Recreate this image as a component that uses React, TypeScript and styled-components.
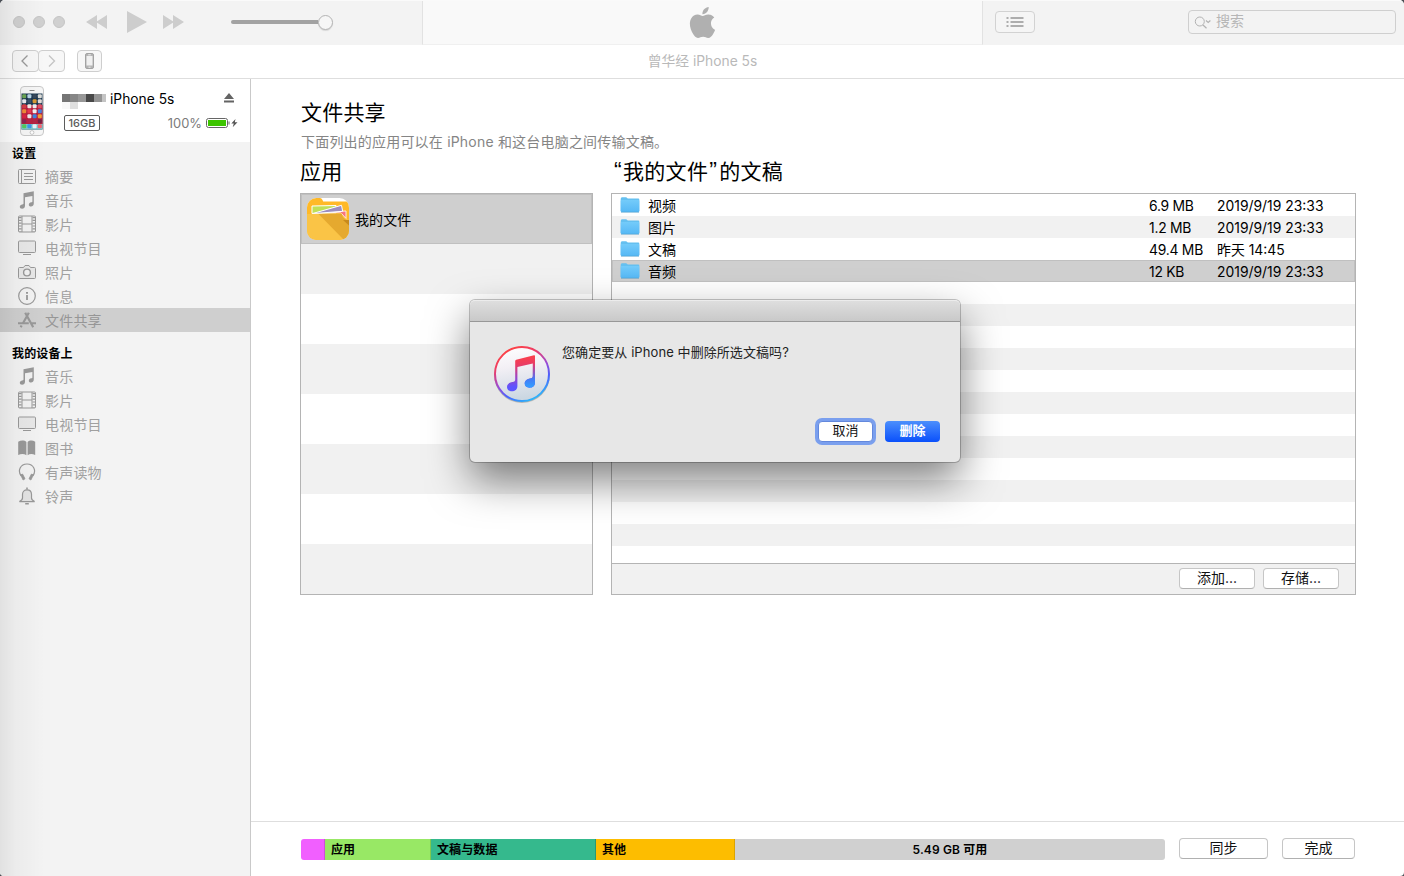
import React from "react";
import styled, { createGlobalStyle, css } from "styled-components";

const GlobalStyle = createGlobalStyle`
  * { box-sizing: border-box; }
  html, body { margin: 0; padding: 0; background: #4a4e55; }
  body { font-family: Inter, "Noto Sans CJK SC", sans-serif; font-size: 14px; color: #000; overflow: hidden; }
  svg { display: block; flex: none; }
`;

const Window = styled.div`
  position: relative;
  display: flex;
  flex-direction: column;
  width: 1404px;
  height: 876px;
  background: #fff;
  border-radius: 5px 5px 4px 4px;
  overflow: hidden;
`;

const EdgeShade = styled.div`
  position: absolute;
  left: 0;
  top: 0;
  bottom: 0;
  width: 45px;
  pointer-events: none;
  background: linear-gradient(90deg, rgba(0, 0, 0, 0.075), rgba(0, 0, 0, 0.03) 35%, rgba(0, 0, 0, 0));
`;

/* ---------- toolbar ---------- */

const Toolbar = styled.header`
  display: flex;
  height: 45px;
  flex: none;
  background: #f3f3f3;
  border-top: 1px solid #fafafa;
`;

const Transport = styled.div`
  display: flex;
  align-items: center;
  width: 422px;
  padding: 0 0 2px 13px;
`;

const Lights = styled.div`
  display: flex;
  gap: 8px;
  margin-right: 21px;
`;

const Light = styled.i`
  width: 12px;
  height: 12px;
  border-radius: 50%;
  background: #d0d0d0;
  border: 1px solid #c5c5c5;
`;

const Slider = styled.div`
  display: flex;
  align-items: center;
  margin-left: 47px;
`;

const Track = styled.div`
  width: 87px;
  height: 4px;
  border-radius: 2px 0 0 2px;
  background: #a2a2a2;
`;

const Knob = styled.div`
  width: 15px;
  height: 15px;
  border-radius: 50%;
  background: #f6f6f6;
  border: 1px solid #b4b4b4;
  box-shadow: 0 1px 1px rgba(0, 0, 0, 0.12);
`;

const Display = styled.div`
  display: flex;
  justify-content: center;
  width: 561px;
  padding-top: 6px;
  background: #f9f9f9;
  border: solid #e2e2e2;
  border-width: 0 1px;
  border-bottom: 1px solid #f0f0f0;
`;

const Tools = styled.div`
  display: flex;
  flex: 1;
  align-items: center;
  justify-content: space-between;
  padding: 0 8px 2px 12px;
`;

const ListButton = styled.button`
  display: flex;
  align-items: center;
  justify-content: center;
  width: 40px;
  height: 22px;
  padding: 0;
  border: 1px solid #d2d2d2;
  border-radius: 4px;
  background: #f5f5f5;
`;

const Search = styled.div`
  display: flex;
  align-items: center;
  gap: 5px;
  width: 208px;
  height: 24px;
  padding: 0 0 1px 5px;
  border: 1px solid #cfcfcf;
  border-radius: 4px;
  color: #b6b6b6;
  line-height: 20px;

  span { padding-bottom: 2px; }
`;

/* ---------- navigation strip ---------- */

const NavBar = styled.nav`
  display: grid;
  grid-template-columns: 422px 561px 1fr;
  align-items: center;
  height: 34px;
  padding-bottom: 2px;
  flex: none;
  border-bottom: 1px solid #dedede;
`;

const NavButtons = styled.div`
  display: flex;
  align-items: center;
  padding-left: 12px;
`;

const NavButton = styled.button<{ $w: number; $joined?: boolean }>`
  display: flex;
  align-items: center;
  justify-content: center;
  width: ${(p) => p.$w}px;
  height: 22px;
  padding: 0;
  margin-left: ${(p) => (p.$joined ? -1 : 0)}px;
  margin-right: ${(p) => (p.$joined ? 12 : 0)}px;
  border: 1px solid #cecece;
  border-radius: 4px;
  background: #f7f7f7;
`;

const NavTitle = styled.div`
  text-align: center;
  color: #b9b9b9;
  font-size: 13.8px;
  line-height: 20px;
`;

/* ---------- body ---------- */

const Body = styled.div`
  display: flex;
  flex: 1;
  min-height: 0;
`;

const Sidebar = styled.aside`
  width: 251px;
  flex: none;
  background: #f3f3f3;
  border-right: 1px solid #c9c9c9;
`;

const Device = styled.div`
  display: flex;
  height: 63px;
  padding: 7px 12px 0 20px;
  background: #fff;
`;

const DeviceInfo = styled.div`
  flex: 1;
  margin-left: 18px;
`;

const DeviceLine = styled.div<{ $h: number }>`
  display: flex;
  align-items: center;
  height: ${(p) => p.$h}px;
`;

const DeviceName = styled.span`
  margin-left: 3px;
  font-size: 13.8px;
  flex: 1;
`;

const EjectButton = styled.div`
  margin-right: 4px;
  padding-bottom: 2px;
`;

const Capacity = styled.span`
  width: 36px;
  height: 16px;
  margin-left: 2px;
  border: 1px solid #5c5c5c;
  border-radius: 2px;
  color: #5c5c5c;
  font-size: 11px;
  font-weight: 500;
  line-height: 14px;
  text-align: center;
`;

const Percent = styled.span`
  flex: 1;
  margin-right: 4px;
  text-align: right;
  font-size: 12.9px;
  color: #7b7b7b;
`;

const SectionTitle = styled.h2<{ $spaced?: boolean }>`
  height: 22px;
  margin: ${(p) => (p.$spaced ? 10 : 0)}px 0 0;
  padding-left: 12px;
  font-size: 12px;
  font-weight: 700;
  letter-spacing: 0.15px;
  line-height: 23px;
`;

const Item = styled.div<{ $active?: boolean }>`
  display: flex;
  align-items: center;
  gap: 9px;
  height: 24px;
  padding-left: 18px;
  color: ${(p) => (p.$active ? "#969696" : "#a0a0a0")};
  background: ${(p) => (p.$active ? "#cfcfcf" : "transparent")};
  letter-spacing: 0.2px;
  line-height: 24px;

  span { padding-top: 1px; }
`;

const Main = styled.main`
  display: flex;
  flex-direction: column;
  flex: 1;
`;

const Content = styled.section`
  flex: 1;
  padding: 19px 48px 0 49px;
`;

const Title = styled.h1`
  margin: 0;
  padding-left: 1px;
  font-size: 21px;
  font-weight: 400;
  letter-spacing: 0.2px;
  line-height: 30px;
`;

const Hint = styled.p`
  margin: 0;
  padding-left: 1px;
  color: #858585;
  font-size: 14px;
  letter-spacing: 0.2px;
  line-height: 28px;
`;

const Columns = styled.div`
  display: grid;
  grid-template-columns: 293px 745px;
  column-gap: 18px;
`;

const ColumnTitle = styled.h2<{ $indent?: number }>`
  margin: 0;
  padding-left: ${(p) => p.$indent ?? 0}px;
  font-size: 21px;
  font-weight: 400;
  letter-spacing: 0.3px;
  line-height: 32px;
  height: 37px;
`;

const Quote = styled.span<{ $close?: boolean }>`
  display: inline-block;
  width: 11px;
  padding-left: ${(p) => (p.$close ? 1 : 2)}px;
  font-family: "Liberation Sans", sans-serif;
  font-size: 23px;
  line-height: 20px;
`;

const Panel = styled.div`
  display: flex;
  flex-direction: column;
  height: 402px;
  border: 1px solid #b4b4b4;
`;

const selected = css`
  background: #cfcfcf;
  box-shadow: inset 0 0 0 1px #c0c0c0;
`;

const AppRow = styled.div<{ $alt?: boolean; $selected?: boolean }>`
  display: flex;
  align-items: center;
  gap: 6px;
  height: 50px;
  padding-left: 6px;
  letter-spacing: 0.1px;
  background: ${(p) => (p.$alt ? "#f1f1f1" : "#fff")};
  ${(p) => p.$selected && selected}
`;

const Files = styled.div`
  flex: 1;
  overflow: hidden;
`;

const FileRow = styled.div<{ $alt?: boolean; $selected?: boolean }>`
  display: grid;
  grid-template-columns: 28px 501px 68px 1fr;
  align-items: center;
  height: 22px;
  padding: 0 0 2px 8px;
  font-size: 13.9px;
  background: ${(p) => (p.$alt ? "#f1f1f1" : "#fff")};
  ${(p) => p.$selected && selected}
`;

const FileName = styled.span`
  padding-top: 2px;
  font-size: 14px;
  line-height: 20px;
`;

const FileCell = styled.span<{ $tight?: boolean }>`
  padding-top: 2px;
  line-height: 20px;
  white-space: nowrap;
  letter-spacing: ${(p) => (p.$tight ? -0.25 : 0)}px;
`;

const PanelFooter = styled.div`
  display: flex;
  gap: 8px;
  height: 31px;
  flex: none;
  padding: 4px 16px 0 0;
  justify-content: flex-end;
  background: #f1f1f1;
  border-top: 1px solid #b4b4b4;
`;

const Button = styled.button<{ $w: number }>`
  width: ${(p) => p.$w}px;
  height: 21px;
  padding: 0 0 2px;
  border: 1px solid #c6c6c6;
  border-bottom-color: #b0b0b0;
  border-radius: 4px;
  background: #fff;
  color: #111;
  font: 14px/17px Inter, "Noto Sans CJK SC", sans-serif;
`;

const StatusBar = styled.footer`
  display: flex;
  align-items: flex-start;
  height: 55px;
  padding: 16px 0 0 50px;
  border-top: 1px solid #dedede;
`;

const Capacities = styled.div`
  display: flex;
  width: 864px;
  height: 21px;
  margin: 1px 14px 0 0;
  border-radius: 3px;
  overflow: hidden;
`;

const Segment = styled.div<{ $w?: number; $color: string; $edge?: string }>`
  ${(p) => (p.$w ? `width: ${p.$w}px; padding-left: 6px;` : "flex: 1; text-align: center;")}
  background: ${(p) => p.$color};
  border-right: ${(p) => (p.$edge ? `1px solid ${p.$edge}` : "none")};
  font-size: 12px;
  font-weight: 600;
  letter-spacing: 0.12px;
  line-height: 21px;
`;

const StatusButtons = styled.div`
  display: flex;
  gap: 14px;
`;

/* ---------- dialog ---------- */

const Dialog = styled.div`
  position: absolute;
  left: 470px;
  top: 300px;
  width: 490px;
  height: 162px;
  border-radius: 5px;
  background: #e7e7e7;
  box-shadow: 0 0 0 1px rgba(0, 0, 0, 0.22), 0 18px 42px rgba(0, 0, 0, 0.5);
`;

const DialogBar = styled.div`
  height: 22px;
  border-radius: 5px 5px 0 0;
  background: linear-gradient(#dedede, #c9c9c9);
  border-top: 1px solid #ececec;
  border-bottom: 1px solid #989898;
`;

const DialogBody = styled.div`
  display: flex;
  gap: 12px;
  height: 99px;
  padding: 24px 0 0 24px;
`;

const Message = styled.p`
  margin: -4px 0 0;
  font-size: 13px;
  line-height: 20px;
  letter-spacing: 0.08px;
  color: #222;
`;

const DialogActions = styled.div`
  display: flex;
  justify-content: flex-end;
  gap: 12px;
  padding-right: 20px;
`;

const DialogButton = styled.button<{ $primary?: boolean }>`
  width: 55px;
  height: 21px;
  padding: 0 0 2px;
  border: 0;
  border-radius: 4px;
  font: 13px/19px Inter, "Noto Sans CJK SC", sans-serif;
  ${(p) =>
    p.$primary
      ? css`
          color: #fff;
          font-weight: 600;
          background: linear-gradient(#4c8ffc, #0a50fb);
        `
      : css`
          color: #111;
          background: #fff;
          border: 1px solid #6388dc;
          line-height: 17px;
          box-shadow: 0 0 0 3px #7a9fee;
        `}
`;

/* ---------- icons ---------- */

const Apple = () => (
  <svg width="31" height="31" viewBox="0 0 24 24" fill="#b0b0b0">
    <path d="M12.152 6.896c-.948 0-2.415-1.078-3.96-1.04-2.04.027-3.91 1.183-4.961 3.014-2.117 3.675-.546 9.103 1.519 12.09 1.013 1.454 2.208 3.09 3.792 3.039 1.52-.065 2.09-.987 3.935-.987 1.831 0 2.35.987 3.96.948 1.637-.026 2.676-1.48 3.676-2.948 1.156-1.688 1.636-3.325 1.662-3.415-.039-.013-3.182-1.221-3.22-4.857-.026-3.04 2.48-4.494 2.597-4.559-1.429-2.09-3.623-2.324-4.39-2.376-2-.156-3.675 1.09-4.61 1.09zM15.53 3.83c.843-1.012 1.4-2.427 1.245-3.83-1.207.052-2.662.805-3.532 1.818-.78.896-1.454 2.338-1.273 3.714 1.338.104 2.715-.688 3.559-1.701" />
  </svg>
);

const TransportIcons = () => (
  <svg width="98" height="24" viewBox="0 0 98 24" fill="#cdcdcd">
    <path d="M0 12 11 5v14ZM10 12 21 5v14Z" />
    <path d="M41 1v22l20-11Z" />
    <path d="M98 12 87 5v14ZM88 12 77 5v14Z" />
  </svg>
);

const ListIcon = () => (
  <svg width="18" height="12" viewBox="0 0 18 12" fill="#adadad">
    <path d="M.5 1h2v2h-2zM.5 5h2v2h-2zM.5 9h2v2h-2zM4.500 1h13v2h-13zM4.500 5h13v2h-13zM4.500 9h13v2h-13z" />
  </svg>
);

const SearchIcon = () => (
  <svg width="17" height="14" viewBox="0 0 17 14" fill="none" stroke="#b2b2b2">
    <circle cx="5.800" cy="6.500" r="4.500" />
    <path d="m9 10 3.500 3.300M12 5.500l2.200 2 2.200-2" strokeWidth="1.200" />
  </svg>
);

const Chevron = ({ d, color }: { d: string; color: string }) => (
  <svg width="9" height="12" viewBox="0 0 9 12" fill="none" stroke={color} strokeWidth="1.300">
    <path d={d} />
  </svg>
);

const PhoneIcon = () => (
  <svg width="9" height="16" viewBox="0 0 9 16" fill="none" stroke="#a3a3a3">
    <rect x=".5" y=".5" width="8" height="15" rx="1.500" fill="#b4b4b4" />
    <path d="M1.500 3h6v9.500h-6z" fill="#f0f0f0" stroke="none" />
    <path d="M3.500 14.200h2M3.200 1.800h2.600" stroke="#eee" />
  </svg>
);

const screenColors = [
  "#6aa553", "#b9d5e8", "#38485a", "#dcdcd8",
  "#e9ebef", "#39526d", "#d99a36", "#e4ddd8",
  "#d63d45", "#f4e9e4", "#f0f0f0", "#de5265",
  "#f08c37", "#eb3950", "#f2f2f0", "#4a80db",
  "#db2543", "#f0e9e9", "#3e82df", "#f39b35",
  "#8a2552", "#b62347", "#b02746", "#742345",
  "#53c95d", "#3d96ea", "#eaf2f9", "#f26672",
];

const DevicePicture = () => (
  <svg width="24" height="50" viewBox="0 0 24 50">
    <rect x=".5" y=".5" width="23" height="49" rx="3.500" fill="#f6f6f6" stroke="#c8c8c8" />
    <path d="M9.500 4.500h5" stroke="#888" />
    <rect x="1.500" y="7.500" width="21" height="36" fill="#1c3850" />
    <rect x="1.500" y="19" width="21" height="19" fill="#b8203f" />
    <rect x="1.500" y="38" width="21" height="5.500" fill="#7dc7cb" />
    {screenColors.map((c, i) => (
      <rect key={i} x={2.200 + (i % 4) * 5.200} y={8.300 + Math.floor(i / 4) * 5} width="4" height="4" rx="1" fill={c} />
    ))}
    <circle cx="12" cy="46.500" r="1.900" fill="#fff" stroke="#b5b5b5" strokeWidth=".7" />
  </svg>
);

const Mosaic = () => (
  <svg width="45" height="20" viewBox="0 0 45 20" shapeRendering="crispEdges">
    {["#757575", "#868686", "#979797", "#484848", "#949494", "#c4c4c4"].map((c, i) => (
      <rect key={i} x={i * 8} y="5" width={i === 5 ? 4 : 8} height="8" fill={c} />
    ))}
    <path d="M0 13h8v7H0z" fill="#f8f8f8" />
    <path d="M8 13h8v7H8z" fill="#dfdfdf" />
  </svg>
);

const Eject = () => (
  <svg width="10" height="10" viewBox="0 0 10 10" fill="#646464">
    <path d="M5 0 10 6H0zM0 7.500h10v2H0z" />
  </svg>
);

const Battery = () => (
  <svg width="32" height="10" viewBox="0 0 32 10">
    <rect x=".5" y=".5" width="21" height="9" rx="2" fill="#fff" stroke="#666" />
    <rect x="2" y="2" width="18" height="6" fill="#3cc500" />
    <path d="M23 3.500v3" stroke="#666" />
    <path d="M29.500 1 25.300 5.500h2.500L26.700 9.200 31.500 4.300h-2.700z" fill="#555" />
  </svg>
);

const icons: Record<string, React.ReactNode> = {
  summary: (
    <>
      <rect x=".5" y="2.500" width="17" height="14" rx="1" />
      <path d="M3.500 2.500v14M6 6.500h9M6 9.500h9M6 12.500h9" />
    </>
  ),
  music: (
    <path
      d="M5.500 2.200 15.800.2V12.600c0 2-1.300 3-2.800 3-1.400 0-2.200-.8-2.200-1.900 0-1.500 1.200-2.100 2.400-2.400.9-.2 1.200-.4 1.200-1.100V4.900L7 6.300v8.400c0 2-1.300 3-2.900 3-1.400 0-2.300-.8-2.300-2 0-1.400 1.200-2 2.500-2.300.9-.2 1.200-.4 1.200-1.100Z"
      fill="#999" stroke="none"
    />
  ),
  film: (
    <>
      <rect x=".5" y="1" width="17" height="16" rx="1" />
      <path d="M4 1v16M14 1v16M4 9h10" />
      <path d="M2.300 2v14.500M15.800 2v14.500" strokeDasharray="1.200 1.600" strokeWidth="2.600" />
    </>
  ),
  tv: (
    <>
      <rect x=".5" y="2" width="17" height="11.500" rx="1" fill="#e8e8e8" />
      <path d="M5 15.500h8" />
    </>
  ),
  camera: (
    <>
      <path d="M1.500 4.500h4L7 2.500h4l1.500 2h4q1 0 1 1v9q0 1-1 1h-15q-1 0-1-1v-9q0-1 1-1Z" fill="#e8e8e8" />
      <circle cx="9" cy="9.500" r="3.400" fill="#f2f2f2" strokeWidth="1.400" />
    </>
  ),
  info: (
    <>
      <circle cx="9" cy="9" r="8.300" strokeWidth="1.200" />
      <path d="M9 8v5" strokeWidth="1.800" />
      <path d="M9 5v1.800" strokeWidth="2" />
    </>
  ),
  apps: (
    <>
      <path d="M10.800 1.800 5 12.200M3.600 14.500 2.700 16.200M7.200 1.800 15.200 16.200" strokeWidth="2.200" />
      <path d="M0 12.200h10.800M13.500 12.200H18" strokeWidth="2" />
    </>
  ),
  books: (
    <path d="M.2 2.800C3 1 6.500 1.200 8.400 3v13.200C6.200 14.700 3 14.700.2 16ZM9.600 3c1.900-1.800 5-2 7.600-.2V16c-2.700-1.300-5.500-1.300-7.600.2Z" fill="#999" stroke="none" />
  ),
  headphones: (
    <>
      <path d="M3.200 13C-.8 7.500 2.500 1 9 1s9.800 6.500 5.800 12" strokeWidth="1.200" />
      <path d="m2.600 11.800 2-.7 2.400 4.700-1.900 1.200ZM15.400 11.800l-2-.7-2.400 4.700 1.900 1.200Z" fill="#999" strokeWidth=".8" />
    </>
  ),
  bell: (
    <>
      <path d="M1.400 14.600h15.200c-2-1-3.100-2.100-3.100-3.600V7.500c0-2.900-1.900-4.700-4.500-4.700S4.500 4.600 4.500 7.500V11c0 1.500-1.100 2.600-3.100 3.600Z" fill="#e4e4e4" strokeWidth="1.200" />
      <path d="M9 .5v2M7.200 16.800h3.600" strokeWidth="1.600" />
    </>
  ),
};

const SideIcon = ({ name }: { name: string }) => (
  <svg width="18" height="18" viewBox="0 0 18 18" fill="none" stroke="#999">
    {icons[name]}
  </svg>
);

const AppIcon = () => (
  <svg width="42" height="42" viewBox="0 0 42 42">
    <defs>
      <clipPath id="appShape"><rect width="42" height="42" rx="9.500" /></clipPath>
    </defs>
    <g clipPath="url(#appShape)">
      <path d="M0 0h42v42H0z" fill="#fff" />
      <path d="M0 0h13q1.500 0 2.500 2l.7 1.600H42V42H0Z" fill="#ffb928" />
      <path d="M5 15.500V8l24-.5V15Z" fill="#c0df57" stroke="#fff" />
      <path d="M20 14 39 13v7.500L34 15Z" fill="#f9777c" stroke="#fff" strokeWidth=".8" />
      <path d="M5 15.700 34.500 7.300l1.200 6Z" fill="#9b8dbf" stroke="#fff" />
      <path d="M0 16 34.500 15.500 36 19.500 42 22V42H0Z" fill="#fac446" />
      <path d="m11.500 16 23-.5L36 19.500 42 24V42h-5Z" fill="#e5a92f" />
      <path d="M36 22h6v5.500Z" fill="#c88a1c" />
    </g>
  </svg>
);

const Folder = () => (
  <svg width="20" height="18" viewBox="0 0 20 18">
    <defs>
      <linearGradient id="folderFace" x1="0" y1="0" x2="0" y2="1">
        <stop offset="0" stopColor="#74cbfa" />
        <stop offset="1" stopColor="#56b8f5" />
      </linearGradient>
    </defs>
    <path d="M.7 3Q.7 1.300 2 1.300h4.200l1.600 1.300h10.500q1 0 1 1V15H.7Z" fill="#65c0f0" />
    <rect x=".7" y="4" width="18.600" height="12" rx="1" fill="url(#folderFace)" />
    <path d="M1 16.200h18" stroke="#4a9ccc" strokeWidth=".7" />
  </svg>
);

const ITunesIcon = () => (
  <svg width="56" height="60" viewBox="0 0 56 60">
    <defs>
      <linearGradient id="ring" x1=".25" y1="0" x2=".75" y2="1">
        <stop offset="0" stopColor="#ff4340" />
        <stop offset=".25" stopColor="#ed3d68" />
        <stop offset=".52" stopColor="#9a4bd7" />
        <stop offset=".72" stopColor="#4a5fff" />
        <stop offset="1" stopColor="#27c5f9" />
      </linearGradient>
      <linearGradient id="face" x1="0" y1="0" x2=".15" y2="1">
        <stop offset="0" stopColor="#fff" />
        <stop offset=".4" stopColor="#f3f0f5" />
        <stop offset="1" stopColor="#cbd7e2" />
      </linearGradient>
      <linearGradient id="note" gradientUnits="userSpaceOnUse" x1="25" y1="10" x2="29" y2="45">
        <stop offset="0" stopColor="#ff4047" />
        <stop offset=".25" stopColor="#ea3c63" />
        <stop offset=".6" stopColor="#9a45c9" />
        <stop offset=".85" stopColor="#5c55ff" />
      </linearGradient>
      <linearGradient id="noteBlue" gradientUnits="userSpaceOnUse" x1="36" y1="17" x2="36" y2="41">
        <stop offset="0" stopColor="#d04087" stopOpacity="0" />
        <stop offset=".65" stopColor="#4479f5" />
        <stop offset="1" stopColor="#339dff" />
      </linearGradient>
    </defs>
    <circle cx="28" cy="29.300" r="27.800" fill="#000" opacity=".14" />
    <circle cx="28" cy="28.700" r="28" fill="#000" opacity=".12" />
    <circle cx="28" cy="28" r="27" fill="url(#face)" stroke="url(#ring)" strokeWidth="2" />
    <path
      d="M21.200 15q0-1 1-1.300l17.800-4.400q1-.2 1 .8V36.500c0 3.500-2.500 5.200-5.500 5.200s-4.800-1.700-4.800-4.100c0-3.100 2.800-4.600 5.300-5.100 2-.4 2.800-.7 2.800-2.500V17.600L23.400 21v19c0 3.500-2.400 5.300-5.600 5.300-3 0-4.800-1.800-4.800-4.300 0-3 2.500-4.500 5.500-5 2-.4 2.700-.8 2.700-2.500Z"
      fill="url(#note)"
    />
    <path d="M38.800 17.600 41 17V36.500c0 3.500-2.500 5.200-5.500 5.200s-4.800-1.700-4.800-4.100c0-3.100 2.800-4.600 5.300-5.100 2-.4 2.800-.7 2.800-2.500Z" fill="url(#noteBlue)" />
  </svg>
);

/* ---------- data ---------- */

const settings = [
  ["summary", "摘要"],
  ["music", "音乐"],
  ["film", "影片"],
  ["tv", "电视节目"],
  ["camera", "照片"],
  ["info", "信息"],
  ["apps", "文件共享"],
];

const onDevice = [
  ["music", "音乐"],
  ["film", "影片"],
  ["tv", "电视节目"],
  ["books", "图书"],
  ["headphones", "有声读物"],
  ["bell", "铃声"],
];

const files = [
  { name: "视频", size: "6.9 MB", date: "2019/9/19 23:33" },
  { name: "图片", size: "1.2 MB", date: "2019/9/19 23:33" },
  { name: "文稿", size: "49.4 MB", date: "昨天 14:45" },
  { name: "音频", size: "12 KB", date: "2019/9/19 23:33" },
];

const emptyFileRows = Array.from({ length: 13 }, (_, i) => i + files.length);

export default function App() {
  return (
    <>
      <GlobalStyle />
      <Window>
        <Toolbar>
          <Transport>
            <Lights>
              <Light />
              <Light />
              <Light />
            </Lights>
            <TransportIcons />
            <Slider>
              <Track />
              <Knob />
            </Slider>
          </Transport>
          <Display>
            <Apple />
          </Display>
          <Tools>
            <ListButton>
              <ListIcon />
            </ListButton>
            <Search>
              <SearchIcon />
              <span>搜索</span>
            </Search>
          </Tools>
        </Toolbar>

        <NavBar>
          <NavButtons>
            <NavButton $w={27}>
              <Chevron d="M6.500 .5 1 6 6.500 11.500" color="#999" />
            </NavButton>
            <NavButton $w={27} $joined>
              <Chevron d="M2 .5 7.500 6 2 11.500" color="#c4c4c4" />
            </NavButton>
            <NavButton $w={25}>
              <PhoneIcon />
            </NavButton>
          </NavButtons>
          <NavTitle>曾华经 iPhone 5s</NavTitle>
        </NavBar>

        <Body>
          <Sidebar>
            <Device>
              <DevicePicture />
              <DeviceInfo>
                <DeviceLine $h={26}>
                  <Mosaic />
                  <DeviceName>iPhone 5s</DeviceName>
                  <EjectButton>
                    <Eject />
                  </EjectButton>
                </DeviceLine>
                <DeviceLine $h={22}>
                  <Capacity>16GB</Capacity>
                  <Percent>100%</Percent>
                  <Battery />
                </DeviceLine>
              </DeviceInfo>
            </Device>
            <SectionTitle>设置</SectionTitle>
            {settings.map(([icon, label]) => (
              <Item key={label} $active={icon === "apps"}>
                <SideIcon name={icon} />
                <span>{label}</span>
              </Item>
            ))}
            <SectionTitle $spaced>我的设备上</SectionTitle>
            {onDevice.map(([icon, label]) => (
              <Item key={label}>
                <SideIcon name={icon} />
                <span>{label}</span>
              </Item>
            ))}
          </Sidebar>

          <Main>
            <Content>
              <Title>文件共享</Title>
              <Hint>下面列出的应用可以在 iPhone 和这台电脑之间传输文稿。</Hint>
              <Columns>
                <div>
                  <ColumnTitle>应用</ColumnTitle>
                  <Panel>
                    <AppRow $selected>
                      <AppIcon />
                      我的文件
                    </AppRow>
                    {[1, 2, 3, 4, 5, 6, 7].map((i) => (
                      <AppRow key={i} $alt={i % 2 === 1} />
                    ))}
                  </Panel>
                </div>
                <div>
                  <ColumnTitle $indent={1}>
                    <Quote>“</Quote>我的文件<Quote $close>”</Quote>的文稿
                  </ColumnTitle>
                  <Panel>
                    <Files>
                      {files.map((f, i) => (
                        <FileRow key={f.name} $alt={i % 2 === 1} $selected={i === 3}>
                          <Folder />
                          <FileName>{f.name}</FileName>
                          <FileCell $tight>{f.size}</FileCell>
                          <FileCell>{f.date}</FileCell>
                        </FileRow>
                      ))}
                      {emptyFileRows.map((i) => (
                        <FileRow key={i} $alt={i % 2 === 1} />
                      ))}
                    </Files>
                    <PanelFooter>
                      <Button $w={76}>添加...</Button>
                      <Button $w={76}>存储...</Button>
                    </PanelFooter>
                  </Panel>
                </div>
              </Columns>
            </Content>

            <StatusBar>
              <Capacities>
                <Segment $w={24} $color="#f15fff" $edge="#cf50dc" />
                <Segment $w={106} $color="#98e865" $edge="#80c850">应用</Segment>
                <Segment $w={165} $color="#35b98d" $edge="#2a9873">文稿与数据</Segment>
                <Segment $w={139} $color="#fdbd00" $edge="#dca400">其他</Segment>
                <Segment $color="#d0d0d0">5.49 GB 可用</Segment>
              </Capacities>
              <StatusButtons>
                <Button $w={89}>同步</Button>
                <Button $w={73}>完成</Button>
              </StatusButtons>
            </StatusBar>
          </Main>
        </Body>

        <EdgeShade />

        <Dialog role="dialog">
          <DialogBar />
          <DialogBody>
            <ITunesIcon />
            <Message>您确定要从 iPhone 中删除所选文稿吗?</Message>
          </DialogBody>
          <DialogActions>
            <DialogButton>取消</DialogButton>
            <DialogButton $primary>删除</DialogButton>
          </DialogActions>
        </Dialog>
      </Window>
    </>
  );
}
